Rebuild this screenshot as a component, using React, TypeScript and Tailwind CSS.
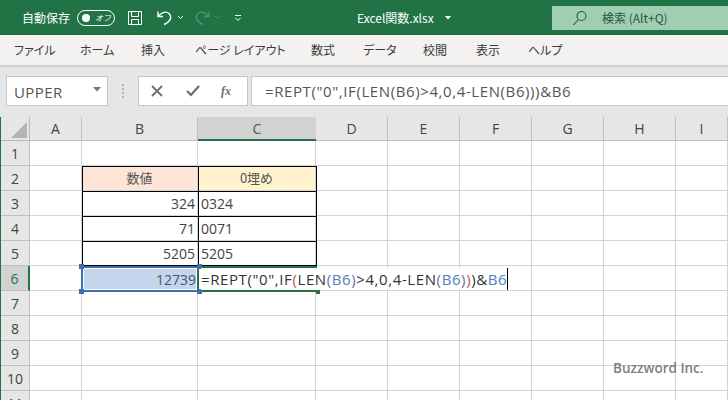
const font = "font-['Noto_Sans_CJK_JP','Noto_Sans',sans-serif]";
const tabs = ['ファイル', 'ホーム', '挿入', 'ページ レイアウト', '数式', 'データ', '校閲', '表示', 'ヘルプ'];
const tabWidths = ['w-[66px]', 'w-[61px]', 'w-[54px]', 'w-[116px]', 'w-[52px]', 'w-[60px]', 'w-[53px]', 'w-[52px]', 'w-[60px]'];
const columns = ['A', 'B', 'C', 'D', 'E', 'F', 'G', 'H', 'I'];
const rows = [1, 2, 3, 4, 5, 6, 7, 8, 9, 10, 11];
const cellText = "font-['Open_Sans',sans-serif] text-[14px]";

function Formula() {
  return (
    <>
      =REPT("0",IF<span className="text-[#c0504d]">(</span>LEN<span className="text-[#8064a2]">(</span>
      <span className="text-[#4f81bd]">B6</span><span className="text-[#8064a2]">)</span>&gt;4,0,4-LEN
      <span className="text-[#8064a2]">(</span><span className="text-[#4f81bd]">B6</span>
      <span className="text-[#8064a2]">)</span><span className="text-[#c0504d]">)</span>)&amp;
      <span className="text-[#4f81bd]">B6</span>
    </>
  );
}

function TitleBar() {
  return (
    <div className="h-[35px] bg-[#217346] flex items-center text-white relative">
      <span className={`${font} text-[12px] ml-[22px] w-[55px] whitespace-nowrap`}>自動保存</span>
      <div className="w-[38px] h-[16px] rounded-full border border-white flex items-center pl-[4px] gap-[5px]">
        <div className="w-[8px] h-[8px] rounded-full bg-white" />
        <span className={`${font} text-[8px] italic leading-none`}>オフ</span>
      </div>
      <svg width="18" height="18" viewBox="0 0 18 18" className="ml-[11px]" fill="none" stroke="white" strokeWidth="1">
        <path d="M2.500 2.500h13v13h-13z M5.500 2.500v5h7v-5 M5.500 15.500v-5h7v5" />
      </svg>
      <svg width="18" height="18" viewBox="0 0 18 18" className="ml-[12px]" fill="none" stroke="white" strokeWidth="1.400">
        <path d="M2 2.500v5h5 M2.500 7C6 3.500 10 2 13 4.500c3 3 2 8-5 11" />
      </svg>
      <svg width="7" height="5" viewBox="0 0 7 5" className="ml-[3px]" fill="none" stroke="white"><path d="M1 1l2.500 2.500L6 1" /></svg>
      <svg width="18" height="18" viewBox="0 0 18 18" className="ml-[9px]" fill="none" stroke="#4d9470" strokeWidth="1.400">
        <path d="M16 2.500v5h-5 M15.500 7C12 3.500 8 2 5 4.500c-3 3-2 8 5 11" />
      </svg>
      <svg width="7" height="5" viewBox="0 0 7 5" className="ml-[3px]" fill="none" stroke="#4d9470"><path d="M1 1l2.500 2.500L6 1" /></svg>
      <svg width="8" height="8" viewBox="0 0 8 8" className="ml-[13px]" fill="none" stroke="white"><path d="M1 1.500h6 M1.500 4l2.500 2.500L6.500 4" /></svg>
      <span className={`${font} absolute left-[357px] top-[9px] text-[12px] leading-[17px] whitespace-nowrap`}>Excel関数.xlsx</span>
      <svg width="6" height="4" viewBox="0 0 6 4" className="absolute left-[445px] top-[16px]"><path d="M0 0h6L3 3.500z" fill="white" /></svg>
      <div className="absolute left-[552px] top-[6px] w-[176px] h-[24px] bg-[#a0ceb2] flex items-center text-[#24593c]">
        <svg width="16" height="16" viewBox="0 0 16 16" className="ml-[20px]" fill="none" stroke="#24593c" strokeWidth="1.100">
          <circle cx="9.500" cy="6" r="4.500" /><path d="M6.500 9.500L1.500 15" />
        </svg>
        <span className={`${font} text-[12px] ml-[14px] whitespace-nowrap`}>検索 (Alt+Q)</span>
      </div>
    </div>
  );
}

function Ribbon() {
  return (
    <div className="h-[30px] bg-[#f3f2f1] flex items-center shadow-[0_1px_3px_rgba(0,0,0,0.18)] relative">
      {tabs.map((t, i) => (
        <span key={t} className={`${font} ${tabWidths[i]} pl-[14px] text-[12px] text-[#3a3a3a] whitespace-nowrap [font-feature-settings:'palt']`}>{t}</span>
      ))}
    </div>
  );
}

function FormulaBar() {
  return (
    <div className="h-[52px] bg-[#e6e6e6] flex py-[11px] pl-[6px]">
      <div className="w-[102px] bg-white border border-[#c6c6c6] flex items-center justify-between pl-[7px] pr-[6px]">
        <span className="font-['Open_Sans',sans-serif] text-[15px] tracking-[0.4px] text-[#555] pt-[3px]">UPPER</span>
        <svg width="8" height="5" viewBox="0 0 8 5" className="mb-[4px]"><path d="M0 0h8L4 4.500z" fill="#777" /></svg>
      </div>
      <div className="w-[30px] flex flex-col items-center justify-center gap-[2px]">
        <div className="w-[2px] h-[2px] bg-[#b0b0b0]" />
        <div className="w-[2px] h-[2px] bg-[#b0b0b0]" />
        <div className="w-[2px] h-[2px] bg-[#b0b0b0]" />
        <div className="w-[2px] h-[2px] bg-[#b0b0b0]" />
      </div>
      <div className="w-[110px] bg-white border border-[#c6c6c6] flex items-center">
        <svg width="12" height="12" viewBox="0 0 12 12" className="ml-[12px]" fill="none" stroke="#6d6d6d" strokeWidth="1.800"><path d="M1 1l10 10 M11 1L1 11" /></svg>
        <svg width="14" height="12" viewBox="0 0 14 12" className="ml-[23px]" fill="none" stroke="#6d6d6d" strokeWidth="2.200"><path d="M1 6l4 4 8-9" /></svg>
        <span className="font-['Liberation_Serif',serif] italic font-bold text-[12px] text-[#6d6d6d] ml-[21px]">fx</span>
      </div>
      <div className="flex-1 ml-[3px] bg-white border border-[#c6c6c6] border-r-0 flex items-center pl-[13px]">
        <span className="font-['Open_Sans',sans-serif] text-[15px] tracking-[0.6px] text-[#555] whitespace-nowrap">=REPT("0",IF(LEN(B6)&gt;4,0,4-LEN(B6)))&amp;B6</span>
      </div>
    </div>
  );
}

function Sheet() {
  return (
    <div className="relative h-[283px] overflow-hidden border-l border-[#217346] bg-white">
      <div className="grid grid-cols-[29px_52px_116px_118px_72px_72px_72px_72px_72px_52px] grid-rows-[24px_repeat(11,25px)]">
        <div className="bg-[#e6e6e6] border-r border-b border-[#b8b8b8] flex items-end justify-end p-[2px]">
          <svg width="16" height="16" viewBox="0 0 16 16"><path d="M16 0v16H0z" fill="#b4b4b4" /></svg>
        </div>
        {columns.map((c) => (
          <div
            key={c}
            className={`${cellText} flex items-center justify-center ${
              c === 'C'
                ? 'bg-[#d2d2d2] border-b-2 border-[#217346] text-[#217346]'
                : 'bg-[#e6e6e6] border-r border-b border-[#c0c0c0] text-[#444]'
            }`}
          >
            {c}
          </div>
        ))}
        {rows.map((r) => (
          <Row key={r} r={r} />
        ))}
      </div>

      {/* table borders and edit overlays */}
      <div className="absolute left-[81px] top-[49px] w-[235px] h-[100px] border border-black pointer-events-none" />
      <div className="absolute left-[81px] top-[74px] w-[235px] h-[1px] bg-black" />
      <div className="absolute left-[81px] top-[99px] w-[235px] h-[1px] bg-black" />
      <div className="absolute left-[81px] top-[124px] w-[235px] h-[1px] bg-black" />
      <div className="absolute left-[197px] top-[49px] w-[1px] h-[100px] bg-black" />

      <div className={`absolute left-[80px] top-[149px] w-[118px] h-[26px] border-2 border-[#3d6eb0] bg-[#c5d5ec] flex items-center justify-end pr-[1px] ${cellText} text-[#44546a] shadow-[inset_0_0_0_1px_white]`}>
        12739
      </div>
      <div className="absolute left-[196px] top-[149px] w-[120px] h-[26px] border-y-2 border-l-2 border-[#217346]" />
      <div className="absolute left-[315px] top-[173px] w-[4px] h-[4px] bg-[#217346]" />
      {[
        'left-[78px] top-[147px]',
        'left-[196px] top-[147px]',
        'left-[78px] top-[172px]',
        'left-[196px] top-[172px]',
      ].map((p) => (
        <div key={p} className={`absolute ${p} w-[5px] h-[5px] bg-[#3d6eb0]`} />
      ))}
      <div className="absolute left-[200px] top-[151px] h-[22px] flex items-center bg-white font-['Open_Sans',sans-serif] text-[15px] tracking-[0.6px] text-[#333] whitespace-nowrap border-r border-black">
        <span><Formula /></span>
      </div>
      <span className="absolute left-[612px] top-[241px] font-['Open_Sans',sans-serif] font-semibold text-[13.5px] text-[#7f7f7f] whitespace-nowrap">
        Buzzword Inc.
      </span>
    </div>
  );
}

function Row({ r }: { r: number }) {
  const active = r === 6;
  const text: Record<string, [string, string]> = {
    '2': ['数値', '0埋め'],
    '3': ['324', '0324'],
    '4': ['71', '0071'],
    '5': ['5205', '5205'],
  };
  const vals = text[String(r)];
  return (
    <>
      <div
        className={`${cellText} flex items-center justify-center ${
          active
            ? 'bg-[#d2d2d2] border-r-2 border-b border-r-[#217346] border-b-[#c0c0c0] text-[#217346]'
            : 'bg-[#e6e6e6] border-r border-b border-[#c0c0c0] text-[#444]'
        }`}
      >
        {r}
      </div>
      {columns.map((c) => {
        let cls = 'border-r border-b border-[#d4d4d4] flex items-center';
        let content = null;
        if (vals && (c === 'B' || c === 'C')) {
          content = c === 'B' ? vals[0] : vals[1];
          if (r === 2) {
            cls += ` justify-center ${font} text-[13px] text-[#555] ${c === 'B' ? 'bg-[#fce4d6]' : 'bg-[#fff2cc]'}`;
          } else {
            cls += ` ${cellText} text-[#444] ${c === 'B' ? 'justify-end pr-[2px]' : 'pl-[3px]'}`;
          }
        }
        return <div key={c} className={cls}>{content}</div>;
      })}
    </>
  );
}

export default function App() {
  return (
    <div className="w-[728px] h-[400px] overflow-hidden bg-white">
      <TitleBar />
      <Ribbon />
      <FormulaBar />
      <Sheet />
    </div>
  );
}
